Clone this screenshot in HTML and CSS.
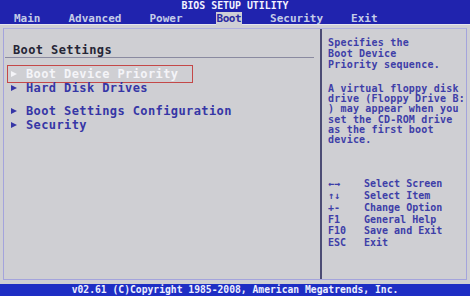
FILE: index.html
```html
<!DOCTYPE html>
<html>
<head>
<meta charset="utf-8">
<link rel="stylesheet" href="styles.css">
</head>
<body>
<div class="screen">
  <header class="topbar">
    <div class="title">BIOS SETUP UTILITY</div>
    <nav class="menu">
      <span class="tab">Main</span>
      <span class="tab">Advanced</span>
      <span class="tab">Power</span>
      <span class="tab active">Boot</span>
      <span class="tab">Security</span>
      <span class="tab">Exit</span>
    </nav>
  </header>
  <main class="frame">
    <section class="left">
      <div class="heading">Boot Settings</div>
      <ul class="items">
        <li class="item selected"><span class="arrow"></span>Boot Device Priority</li>
        <li class="item"><span class="arrow"></span>Hard Disk Drives</li>
        <li class="item spaced"><span class="arrow"></span>Boot Settings Configuration</li>
        <li class="item"><span class="arrow"></span>Security</li>
      </ul>
    </section>
    <aside class="right">
      <p class="help first">Specifies the<br>Boot Device<br>Priority sequence.</p>
      <p class="help second">A virtual floppy disk<br>drive (Floppy Drive B:<br>) may appear when you<br>set the CD-ROM drive<br>as the first boot<br>device.</p>
      <dl class="keys">
        <div class="keyrow"><dt>←→</dt><dd>Select Screen</dd></div>
        <div class="keyrow"><dt>↑↓</dt><dd>Select Item</dd></div>
        <div class="keyrow"><dt>+-</dt><dd>Change Option</dd></div>
        <div class="keyrow"><dt>F1</dt><dd>General Help</dd></div>
        <div class="keyrow"><dt>F10</dt><dd>Save and Exit</dd></div>
        <div class="keyrow"><dt>ESC</dt><dd>Exit</dd></div>
      </dl>
    </aside>
  </main>
  <footer class="footer">v02.61 (C)Copyright 1985-2008, American Megatrends, Inc.</footer>
</div>
</body>
</html>
```
FILE: styles.css
```css
* { box-sizing: border-box; }
html, body {
  margin: 0;
  padding: 0;
  background: #cfcfd3;
}
body {
  width: 470px;
  height: 296px;
  overflow: hidden;
  font-family: "DejaVu Sans Mono", "Liberation Mono", monospace;
  font-weight: bold;
}
.screen {
  display: flex;
  flex-direction: column;
  height: 296px;
}
.topbar {
  height: 25px;
  background: #2023ae;
  border-bottom: 1px solid #e4e4f0;
}
.title {
  height: 11px;
  line-height: 11px;
  text-align: center;
  color: #f4f4ff;
  font-size: 9.9px;
}
.menu {
  display: flex;
  gap: 28px;
  padding-left: 14px;
  height: 13px;
  margin-top: 1px;
  align-items: stretch;
}
.tab {
  font-size: 11px;
  line-height: 13px;
  color: #c4cce8;
}
.tab.active {
  background: #cfcfd6;
  color: #2a2aa0;
  margin-left: 5px;
  padding: 0 1px;
  letter-spacing: -0.5px;
}
.frame {
  display: flex;
  height: 252px;
  margin: 3px 3px 0 3px;
  border: 1px solid #a4a4dc;
  border-top-color: #b0b0e0;
}
.left {
  width: 316px;
  padding-top: 14px;
}
.heading {
  font-size: 12px;
  line-height: 14px;
  letter-spacing: 0.4px;
  color: #262636;
  padding-left: 8px;
  margin: 0 6px 0 1px;
  border-bottom: 1px solid #8a8aa0;
}
.items {
  list-style: none;
  margin: 9px 0 0 0;
  padding: 0;
}
.item {
  display: flex;
  align-items: center;
  width: fit-content;
  margin-left: 5px;
  padding: 0 12px 0 2px;
  font-size: 12px;
  line-height: 14px;
  height: 14px;
  letter-spacing: 0.4px;
  color: #3636a6;
}
.item.spaced { margin-top: 9px; }
.arrow {
  width: 0;
  height: 0;
  border-left: 6px solid currentColor;
  border-top: 3.5px solid transparent;
  border-bottom: 3.5px solid transparent;
  margin-right: 9px;
}
.item.selected {
  color: #f4f4f8;
  box-shadow: 0 0 0 1px #cfcfd3, 0 0 0 2px #c44848;
}
.right {
  flex: 1;
  border-left: 2px solid #4c4c74;
  padding: 8px 0 0 6px;
  color: #3e3ea8;
  font-size: 10px;
}
.help {
  margin: 0;
  letter-spacing: 0.2px;
}
.help.first { line-height: 11px; }
.help.second { line-height: 10.2px; margin-top: 14px; }
.keys {
  margin: 33px 0 0 0;
}
.keyrow {
  display: flex;
  line-height: 11.8px;
}
.keys dt {
  width: 36px;
  flex: none;
}
.keys dd {
  margin: 0;
}
.footer {
  margin-top: auto;
  height: 12px;
  line-height: 12px;
  background: #1e2ec4;
  color: #eef0ff;
  font-size: 9.7px;
  text-align: center;
}
```
